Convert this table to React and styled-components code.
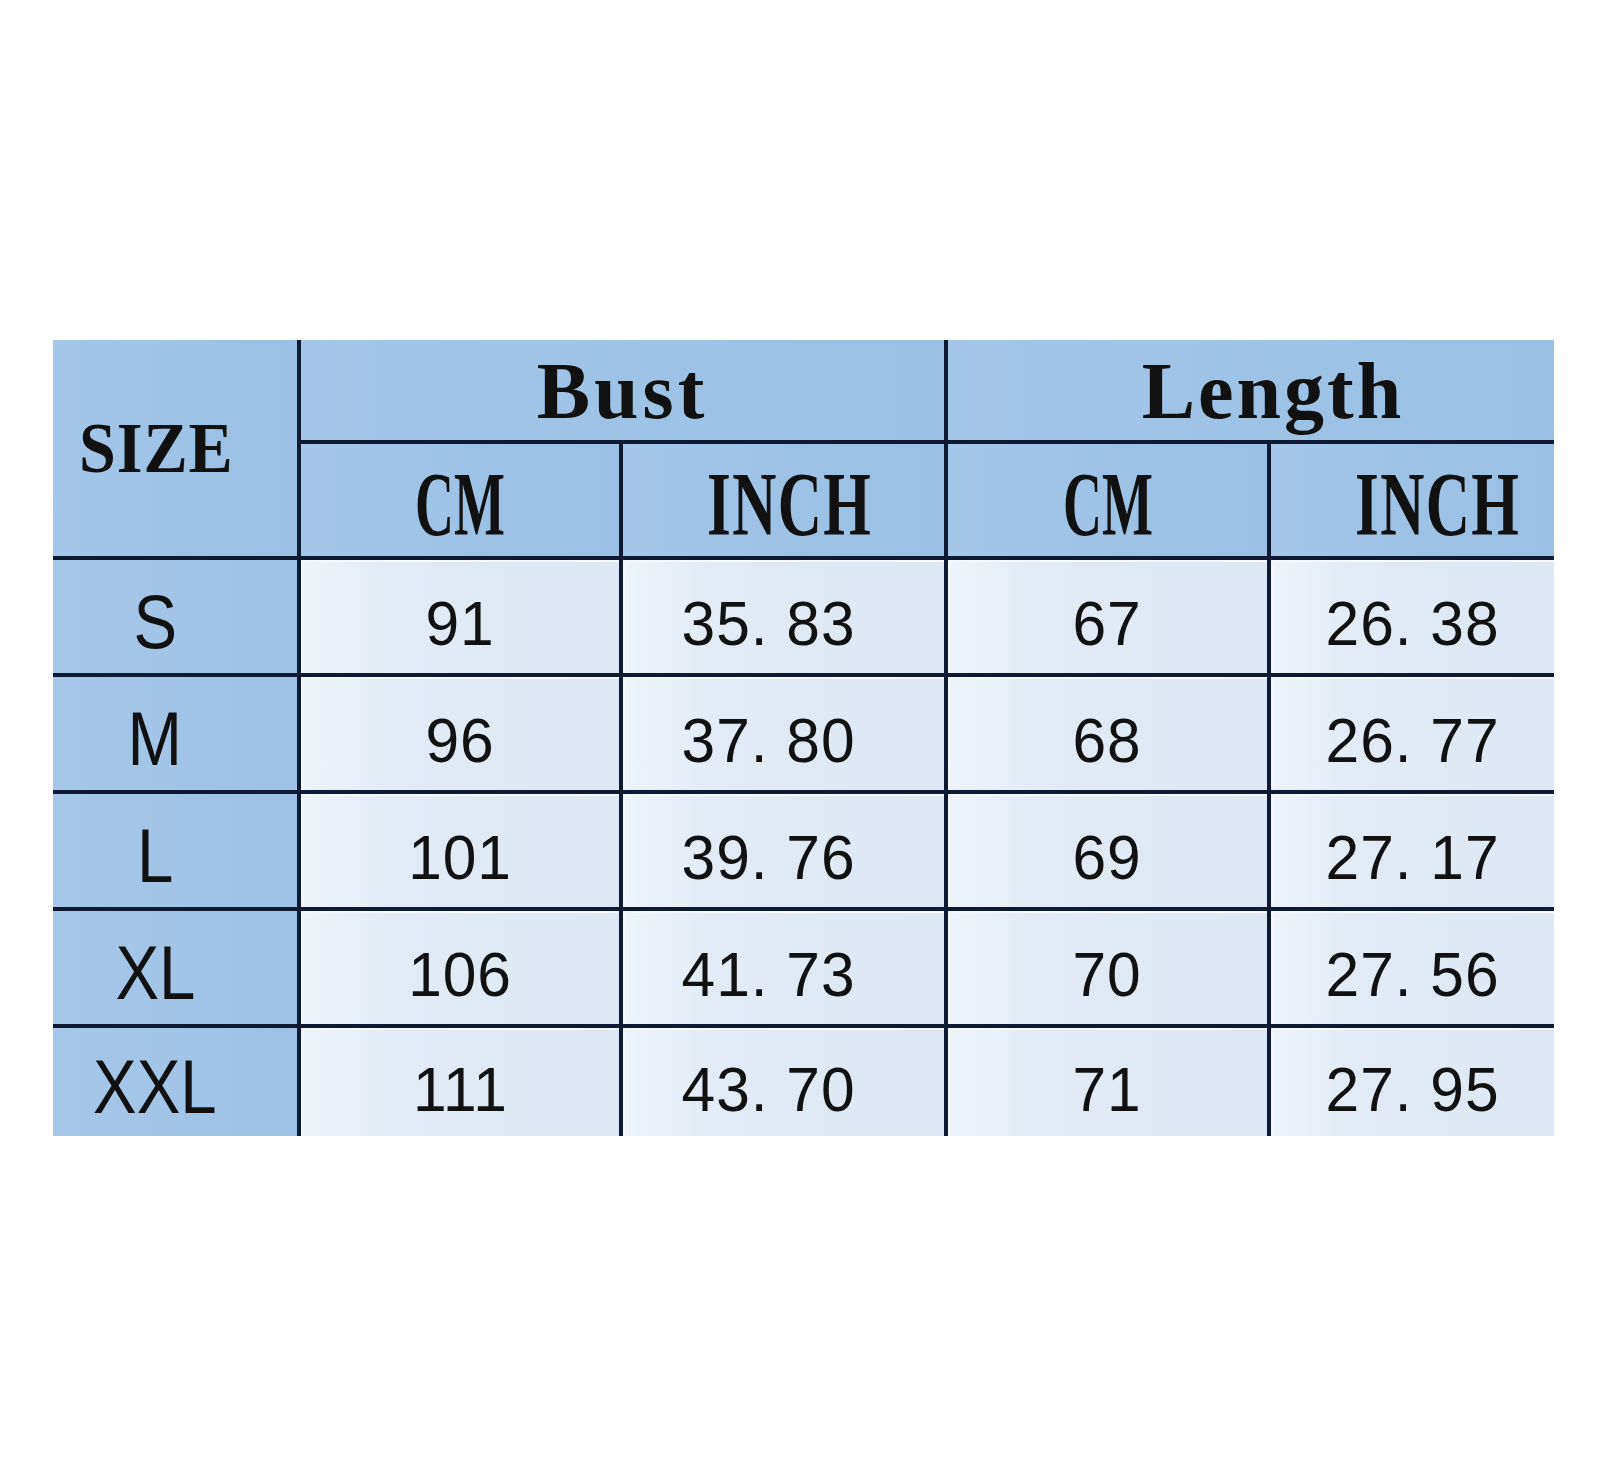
import React from 'react';
import styled, { createGlobalStyle } from 'styled-components';

const GlobalStyle = createGlobalStyle`
  html, body {
    margin: 0;
    padding: 0;
    background: #ffffff;
  }
`;

const Page = styled.div`
  width: 1600px;
  height: 1478px;
  box-sizing: border-box;
  padding: 340px 0 0 53px;
  background: #ffffff;
`;

const Chart = styled.div`
  display: grid;
  grid-template-columns: 244px 318px 321px 319px 283px;
  grid-template-rows: 100px 112px 113px 113px 113px 113px 108px;
  gap: 4px;
  width: 1501px;
  background: #0e1a33;
`;

// $left: left-aligned label, $padL / $padR nudge the label off centre
const Cell = styled.div`
  display: flex;
  align-items: center;
  justify-content: ${p => (p.$left ? 'flex-start' : 'center')};
  padding-left: ${p => p.$padL || 0}px;
  padding-right: ${p => p.$padR || 0}px;
  padding-top: ${p => p.$shift || 0}px;
  box-sizing: border-box;
  overflow: hidden;
  grid-row: ${p => p.$rows || 'auto'};
  grid-column: ${p => p.$cols || 'auto'};
  color: #111111;
`;

const HeadCell = styled(Cell)`
  background: linear-gradient(90deg, #a3c6e9 0%, #9cc2e6 60%, #9ac0e5 100%);
`;

const SizeCell = styled(Cell)`
  background: linear-gradient(90deg, #a5c7e9 0%, #9dc2e6 100%);
`;

const DataCell = styled(Cell)`
  background: linear-gradient(90deg, #eef4fa 0%, #e1eaf5 30%, #dde8f4 100%);
  box-shadow: inset 2px 2px 0 #f5f9fd;
`;

const SerifLabel = styled.span`
  display: inline-block;
  font-family: "Liberation Serif", "Times New Roman", serif;
  font-weight: 700;
  font-size: ${p => p.$size}px;
  line-height: 1;
  letter-spacing: ${p => p.$spacing || 0}px;
  transform: scaleX(${p => p.$squeeze || 1});
  transform-origin: ${p => (p.$origin || 'center')};
  white-space: nowrap;
`;

const SansLabel = styled.span`
  display: inline-block;
  font-family: "Liberation Sans", Arial, sans-serif;
  font-weight: ${p => p.$weight || 400};
  font-size: ${p => p.$size}px;
  line-height: 1;
  letter-spacing: ${p => p.$spacing || 0}px;
  transform: scaleX(${p => p.$squeeze || 1});
  white-space: nowrap;
`;

const rows = [
  { size: 'S', bustCm: '91', bustIn: '35. 83', lenCm: '67', lenIn: '26. 38' },
  { size: 'M', bustCm: '96', bustIn: '37. 80', lenCm: '68', lenIn: '26. 77' },
  { size: 'L', bustCm: '101', bustIn: '39. 76', lenCm: '69', lenIn: '27. 17' },
  { size: 'XL', bustCm: '106', bustIn: '41. 73', lenCm: '70', lenIn: '27. 56' },
  { size: 'XXL', bustCm: '111', bustIn: '43. 70', lenCm: '71', lenIn: '27. 95' },
];

const Number = ({ children }) => (
  <SansLabel $size={63} $squeeze={0.96} $spacing={1}>{children}</SansLabel>
);

export default function App() {
  return (
    <Page>
      <GlobalStyle />
      <Chart>
        <HeadCell $rows="1 / span 2" $left $padL={26}>
          <SerifLabel $size={72} $squeeze={0.92} $spacing={1} $origin="left">SIZE</SerifLabel>
        </HeadCell>
        <HeadCell $cols="2 / span 2" $shift={2}>
          <SerifLabel $size={80} $spacing={4}>Bust</SerifLabel>
        </HeadCell>
        <HeadCell $cols="4 / span 2" $shift={2} $padL={44}>
          <SerifLabel $size={80} $spacing={3}>Length</SerifLabel>
        </HeadCell>
        <HeadCell $shift={10}>
          <SerifLabel $size={90} $squeeze={0.6}>CM</SerifLabel>
        </HeadCell>
        <HeadCell $shift={10} $left $padL={84}>
          <SerifLabel $size={90} $squeeze={0.68} $spacing={2} $origin="left">INCH</SerifLabel>
        </HeadCell>
        <HeadCell $shift={10}>
          <SerifLabel $size={90} $squeeze={0.6}>CM</SerifLabel>
        </HeadCell>
        <HeadCell $shift={10} $left $padL={84}>
          <SerifLabel $size={90} $squeeze={0.68} $spacing={2} $origin="left">INCH</SerifLabel>
        </HeadCell>

        {rows.map(r => (
          <React.Fragment key={r.size}>
            <SizeCell $shift={10} $padR={40}>
              <SansLabel $size={76} $squeeze={0.86}>{r.size}</SansLabel>
            </SizeCell>
            <DataCell $shift={14}><Number>{r.bustCm}</Number></DataCell>
            <DataCell $shift={14} $padR={30}><Number>{r.bustIn}</Number></DataCell>
            <DataCell $shift={14}><Number>{r.lenCm}</Number></DataCell>
            <DataCell $shift={14}><Number>{r.lenIn}</Number></DataCell>
          </React.Fragment>
        ))}
      </Chart>
    </Page>
  );
}
